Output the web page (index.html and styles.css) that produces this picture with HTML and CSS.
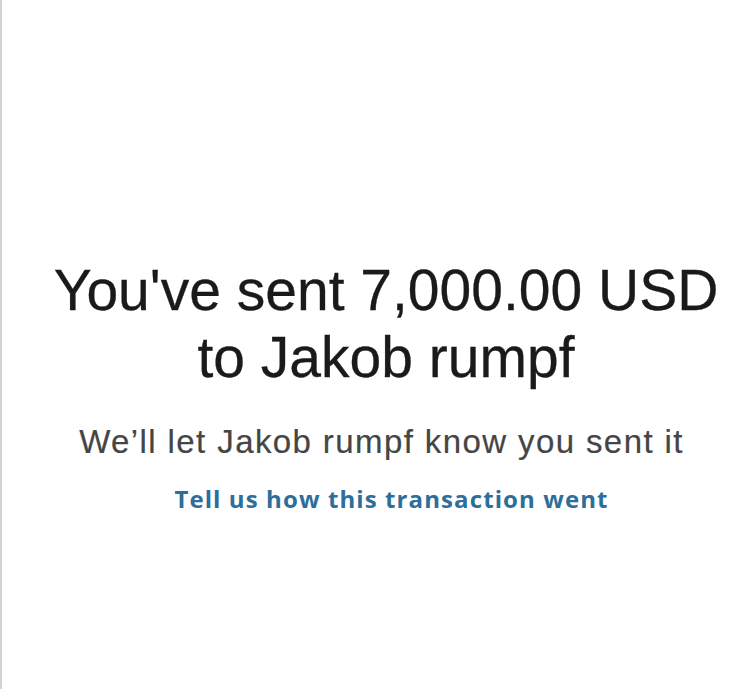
FILE: index.html
```html
<!DOCTYPE html>
<html lang="en">
<head>
<meta charset="utf-8">
<title>Sent</title>
<link rel="stylesheet" href="styles.css">
</head>
<body>
<main class="page">
  <section class="confirm">
    <h1 class="title">You've sent 7,000.00 USD<br>to Jakob rumpf</h1>
    <p class="note">We’ll let Jakob rumpf know you sent it</p>
    <a class="feedback" href="#">Tell us how this transaction went</a>
  </section>
</main>
</body>
</html>
```

FILE: styles.css
```css
html, body {
  margin: 0;
  padding: 0;
  background: #ffffff;
}
.page {
  width: 750px;
  height: 689px;
  box-sizing: border-box;
  border-left: 2px solid #d2d2d2;
  display: flex;
  flex-direction: column;
  align-items: center;
  padding-top: 257px;
}
.confirm {
  display: flex;
  flex-direction: column;
  align-items: center;
  text-align: center;
  padding-left: 20px;
}
.title {
  margin: 0;
  font-family: "Liberation Sans", Arial, sans-serif;
  font-weight: 400;
  font-size: 57px;
  line-height: 67px;
  color: #1a1a1a;
  -webkit-text-stroke: 0.3px #1a1a1a;
}
.note {
  margin: 31px 0 0;
  padding-right: 9px;
  font-family: "Liberation Sans", Arial, sans-serif;
  font-size: 33px;
  line-height: 40px;
  letter-spacing: 1.4px;
  color: #454545;
  -webkit-text-stroke: 0.2px #454545;
}
.feedback {
  margin-top: 21px;
  padding-left: 11px;
  font-family: "Open Sans", sans-serif;
  font-weight: 700;
  font-size: 24px;
  line-height: 32px;
  letter-spacing: 1.1px;
  color: #2d6e9b;
  text-decoration: none;
}
```
